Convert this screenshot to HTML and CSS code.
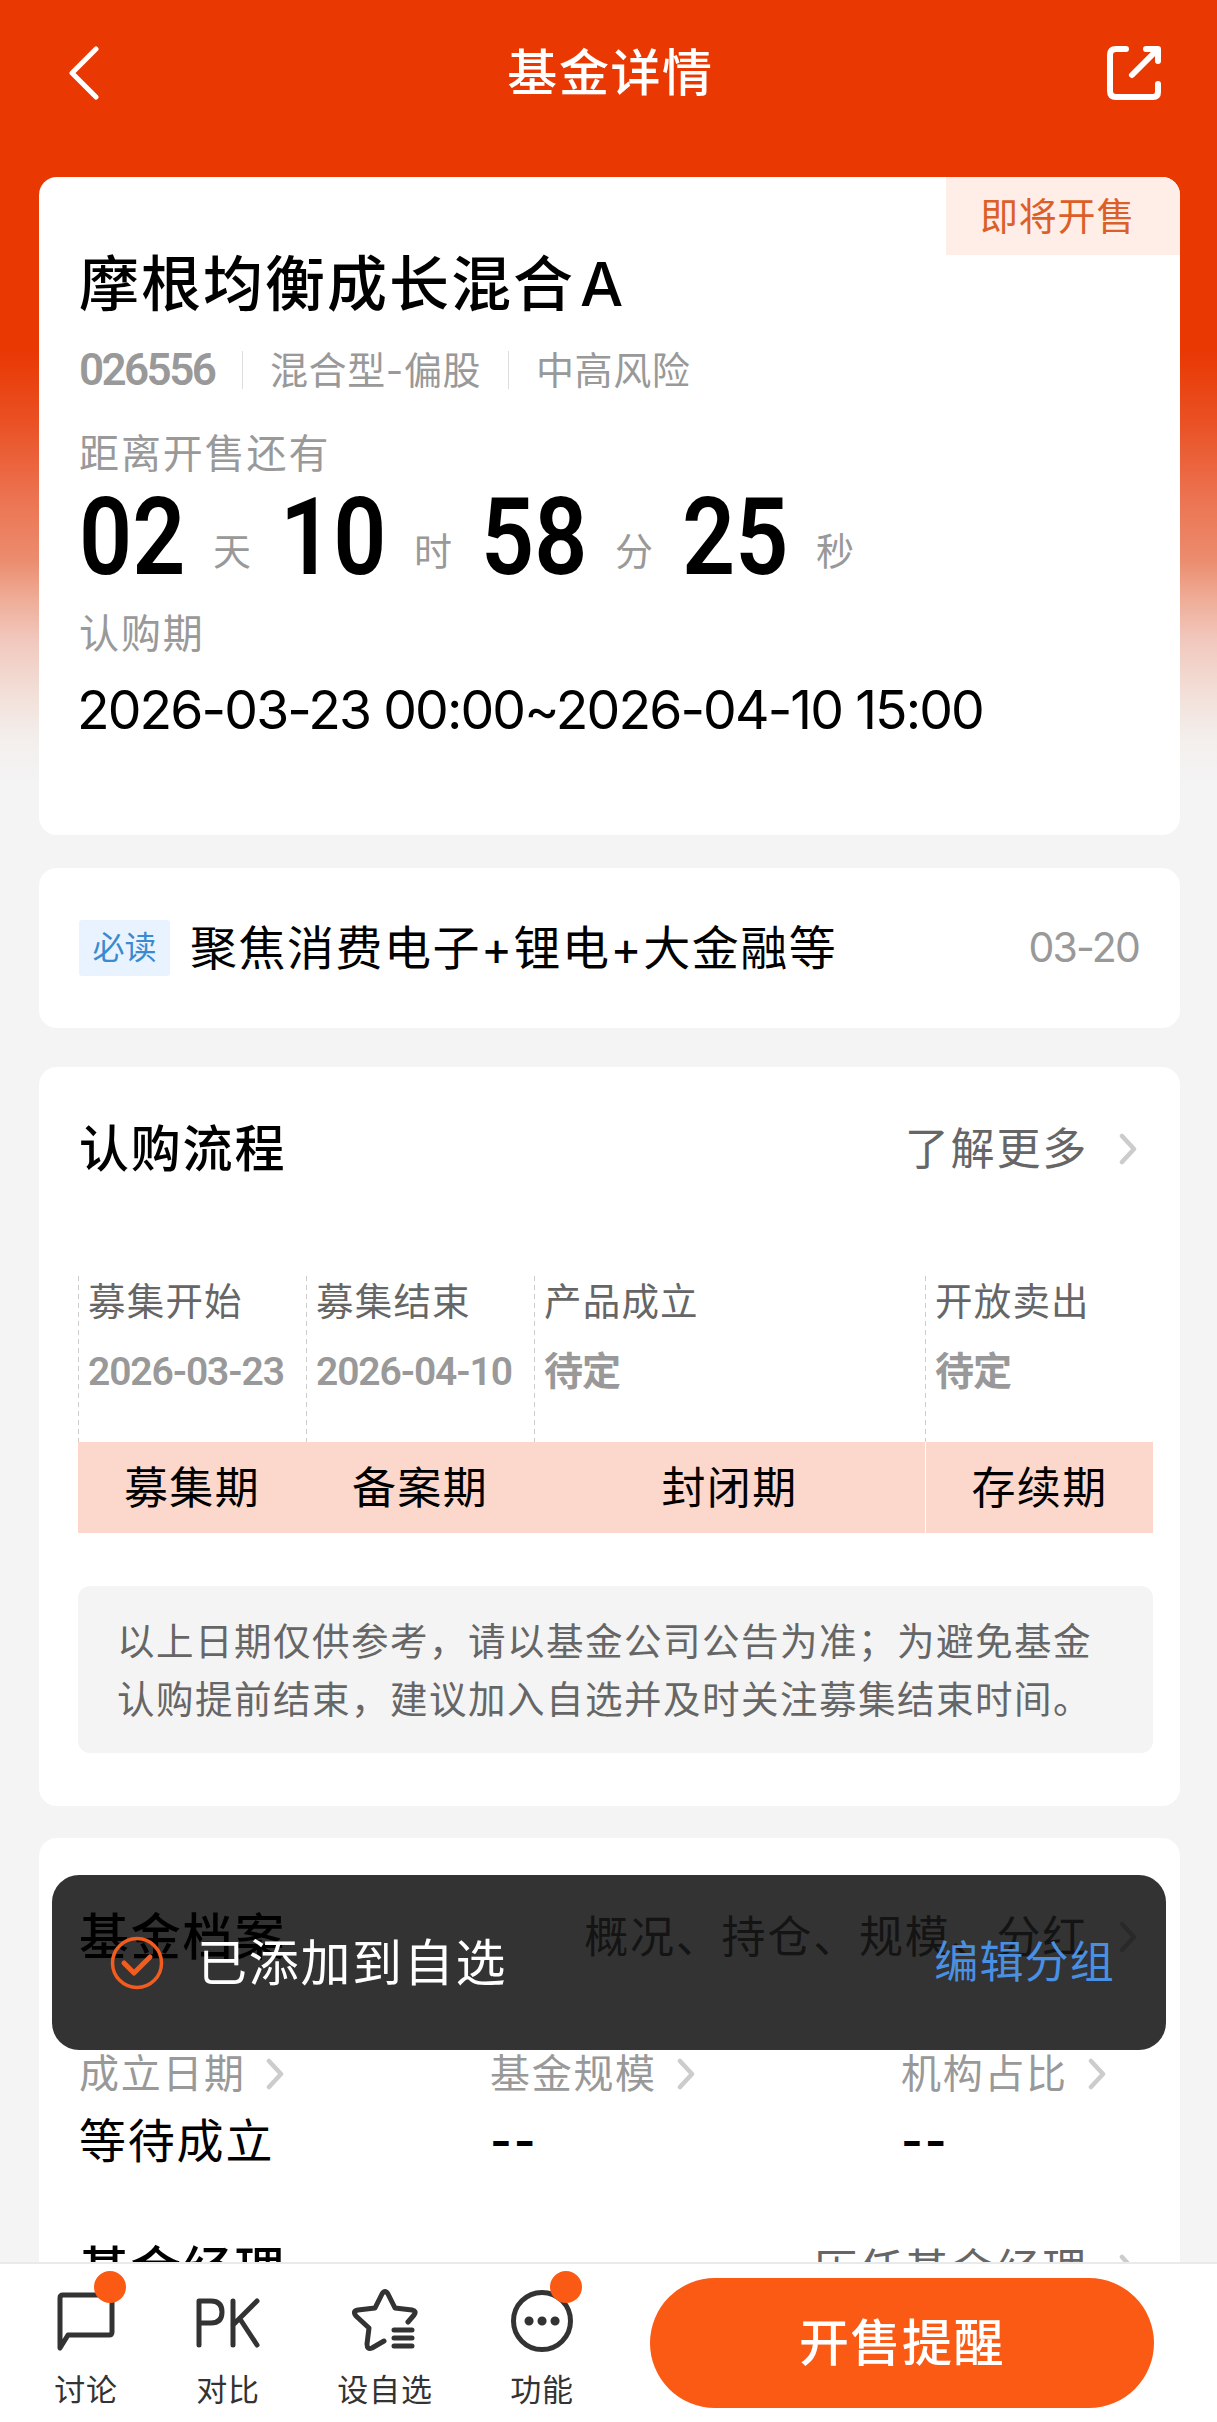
FILE: index.html
```
<!DOCTYPE html>
<html lang="zh-CN">
<head>
  <meta charset="UTF-8">
  <title>基金详情</title>
  <link rel="stylesheet" href="styles.css">
</head>
<body>
  <header class="topbar">
    <svg class="back-icon" viewBox="0 0 32 56"><path d="M29 4 L5 28 L29 52"/></svg>
    <h1>基金详情</h1>
    <svg class="share-icon" viewBox="0 0 58 58"><path d="M21 5 H11 Q5 5 5 11 V47 Q5 53 11 53 H48 Q53 53 53 48 V40 M27 31 L52 6 M41 5 H53 V17"/></svg>
  </header>

  <main>
    <!-- Fund summary -->
    <section class="card summary">
      <span class="status">即将开售</span>
      <h2 class="fund-name">摩根均衡成长混合<span>A</span></h2>
      <div class="meta">
        <span class="code">026556</span>
        <span class="type">混合型-偏股</span>
        <span class="risk">中高风险</span>
      </div>
      <p class="caption">距离开售还有</p>
      <div class="countdown">
        <div><b>02</b><span>天</span></div>
        <div><b>10</b><span>时</span></div>
        <div><b>58</b><span>分</span></div>
        <div><b>25</b><span>秒</span></div>
      </div>
      <p class="caption">认购期</p>
      <p class="period">2026-03-23 00:00~2026-04-10 15:00</p>
    </section>

    <!-- Must read -->
    <section class="card notice">
      <span class="tag">必读</span>
      <span class="notice-title">聚焦消费电子+锂电+大金融等</span>
      <span class="notice-date">03-20</span>
    </section>

    <!-- Subscription steps -->
    <section class="card process">
      <div class="card-head">
        <h3>认购流程</h3>
        <a class="more">了解更多<svg class="arrow" viewBox="0 0 20 32"><path d="M4 3 L16 16 L4 29"/></svg></a>
      </div>
      <div class="timeline">
        <div class="step"><p>募集开始</p><b>2026-03-23</b></div>
        <div class="step"><p>募集结束</p><b>2026-04-10</b></div>
        <div class="step"><p>产品成立</p><b>待定</b></div>
        <div class="step"><p>开放卖出</p><b>待定</b></div>
        <div class="phase">募集期</div>
        <div class="phase">备案期</div>
        <div class="phase">封闭期</div>
        <div class="phase last">存续期</div>
      </div>
      <p class="tip">以上日期仅供参考，请以基金公司公告为准；为避免基金<br>认购提前结束，建议加入自选并及时关注募集结束时间。</p>
    </section>

    <!-- Fund archive -->
    <section class="card archive">
      <div class="card-head">
        <h3>基金档案</h3>
        <a class="more">概况、持仓、规模、分红<svg class="arrow" viewBox="0 0 20 32"><path d="M4 3 L16 16 L4 29"/></svg></a>
      </div>
      <div class="facts">
        <div>
          <p>成立日期<svg class="arrow" viewBox="0 0 20 32"><path d="M4 3 L16 16 L4 29"/></svg></p>
          <strong>等待成立</strong>
        </div>
        <div>
          <p>基金规模<svg class="arrow" viewBox="0 0 20 32"><path d="M4 3 L16 16 L4 29"/></svg></p>
          <strong class="empty">--</strong>
        </div>
        <div>
          <p>机构占比<svg class="arrow" viewBox="0 0 20 32"><path d="M4 3 L16 16 L4 29"/></svg></p>
          <strong class="empty">--</strong>
        </div>
      </div>
      <div class="card-head">
        <h3>基金经理</h3>
        <a class="more">历任基金经理<svg class="arrow" viewBox="0 0 20 32"><path d="M4 3 L16 16 L4 29"/></svg></a>
      </div>
    </section>
  </main>

  <!-- Toast -->
  <div class="toast">
    <svg class="check" viewBox="0 0 54 54"><circle cx="27" cy="27" r="24.5"/><path d="M14 27 L24 37 L40 21"/></svg>
    <span>已添加到自选</span>
    <a>编辑分组</a>
  </div>

  <!-- Bottom actions -->
  <nav class="bottombar">
    <a class="item discuss">
      <svg viewBox="0 0 66 66"><path d="M7 60 V10 Q7 7 10 7 H56 Q59 7 59 10 V44 Q59 47 56 47 H15 Z"/></svg>
      <i class="dot"></i>
      讨论
    </a>
    <a class="item compare">
      <svg viewBox="0 0 66 66"><path d="M4 57 V13 H16 Q27 13 27 24 Q27 35 16 35 H4 M38 13 V57 M62 13 L38 37 M45 31 L62 57"/></svg>
      对比
    </a>
    <a class="item favorite">
      <svg viewBox="0 0 66 66"><path d="M56 34 L62 27 Q65 23 60 22 L43 20 L36 6 Q33 1 30 6 L23 20 L6 22 Q0 23 4 28 L17 40 L15 56 Q15 62 20 60 L32 53"/><path class="lines" d="M42 42 H60 M42 50 H60 M42 58 H60"/></svg>
      设自选
    </a>
    <a class="item functions">
      <svg viewBox="0 0 66 66"><circle cx="33" cy="33" r="28.500"/><path class="dots" d="M20 33 h.1 M33 33 h.1 M46 33 h.1"/></svg>
      <i class="dot"></i>
      功能
    </a>
    <button>开售提醒</button>
  </nav>
</body>
</html>
```
FILE: styles.css
```
* { box-sizing: border-box; }
body {
  font-family: Inter, "Noto Sans CJK SC", sans-serif;
  line-height: 1.2;
  margin: 0;
  height: 2422px;
  overflow: hidden;
  position: relative;
  color: #000;
  background: #f4f4f4 linear-gradient(#e93802 0, #e93802 350px, #ea5023 420px, #ec7452 500px, #eb8c6e 560px, #efad98 600px, #f1c8bd 640px, #f2e0d9 695px, #f3efed 740px, #f4f4f4 785px) no-repeat;
}
h1, h2, h3, p { margin: 0; font-weight: 400; }
svg {
  display: block;
  fill: none;
  stroke: currentColor;
  stroke-linecap: round;
  stroke-linejoin: round;
}

.topbar {
  display: flex;
  justify-content: space-between;
  align-items: center;
  height: 177px;
  padding: 0 54px 32px 67px;
  color: #fff;
}
.topbar h1 {
  font-size: 50px;
  letter-spacing: 1.6px;
  font-weight: 500;
  margin-left: 17px;
}
.back-icon { width: 32px; height: 56px; stroke-width: 5; }
.share-icon { width: 58px; height: 58px; stroke-width: 6; }

.card {
  background: #fff;
  border-radius: 18px;
  margin: 0 37px 0 39px;
  padding: 0 27px 0 40px;
}

.summary {
  position: relative;
  height: 658px;
  padding-top: 71px;
  overflow: hidden;
}
.status {
  position: absolute;
  top: 0;
  right: 0;
  width: 234px;
  height: 78px;
  line-height: 78px;
  padding-left: 34px;
  font-size: 38px;
  letter-spacing: 0.8px;
  color: #dc5f28;
  background: #ffede7;
}
.fund-name {
  font-size: 60px;
  letter-spacing: 2px;
  line-height: 72px;
  font-weight: 500;
}
.fund-name span { margin-left: 5px; font-size: 61px; }
.meta {
  display: flex;
  align-items: center;
  margin-top: 29px;
  height: 42px;
  line-height: 42px;
  font-size: 38px;
  letter-spacing: 0.6px;
  color: #999;
}
.meta .code {
  font: 600 44px/44px Roboto, sans-serif;
  letter-spacing: -2.6px;
  width: 163px;
}
.meta .type, .meta .risk {
  border-left: 1px solid #ddd;
  line-height: 38px;
  padding-left: 27px;
}
.meta .type { width: 266px; }
.caption {
  font-size: 40px;
  letter-spacing: 1.9px;
  line-height: 50px;
  color: #999;
}
.meta + .caption { margin-top: 38px; }
.countdown { display: flex; height: 114px; }
.countdown div { display: flex; width: 201px; }
.countdown b {
  font: 600 107px/117px Roboto, sans-serif;
  width: 134px;
  transform: scaleX(.87);
  transform-origin: 0 0;
}
.countdown span { font-size: 38px; line-height: 145px; color: #999; }
.countdown + .caption { margin-top: 16px; }
.period {
  font-size: 53.500px;
  line-height: 64px;
  margin: 19px 0 0 -2px;
  letter-spacing: -1.9px;
  white-space: nowrap;
}

.notice {
  display: flex;
  align-items: center;
  height: 160px;
  margin-top: 33px;
  padding-right: 41px;
}
.tag {
  width: 91px;
  height: 56px;
  line-height: 56px;
  text-align: center;
  font-size: 32px;
  color: #3b8ad0;
  background: #e9f3ff;
  border-radius: 3px;
}
.notice-title { margin-left: 20px; font-size: 47px; letter-spacing: 1.5px; }
.notice-date {
  margin-left: auto;
  font-size: 41px;
  letter-spacing: -1.8px;
  color: #999;
}

.process { height: 739px; margin-top: 39px; padding-top: 46px; }
.card-head {
  display: flex;
  justify-content: space-between;
  align-items: center;
  height: 72px;
  padding-right: 15px;
}
.card-head h3 { font-size: 50px; letter-spacing: 1.8px; font-weight: 500; }
.more {
  display: flex;
  align-items: center;
  font-size: 44px;
  letter-spacing: 1.8px;
  color: #666;
}
.more .arrow { margin-left: 30px; }
.arrow { width: 20px; height: 32px; stroke: #ccc; stroke-width: 4.5; }

.timeline {
  display: grid;
  grid-template-columns: 228px 228px 391px 228px;
  grid-template-rows: 166px 91px;
  margin: 91px 0 0 -1px;
}
.step {
  padding-left: 10px;
  background: repeating-linear-gradient(#ccc 0 5px, transparent 5px 9px) 0 0 / 1px 100% no-repeat;
}
.step p {
  font-size: 37.500px;
  letter-spacing: 1.2px;
  line-height: 52px;
  color: #666;
}
.step b {
  display: block;
  font: 600 39px/52px Roboto, "Noto Sans CJK SC", sans-serif;
  letter-spacing: -1.1px;
  margin-top: 18px;
  color: #999;
}
.phase {
  background: #fbd8cb;
  text-align: center;
  font-size: 44px;
  letter-spacing: 1.4px;
  line-height: 93px;
}
.phase.last { border-left: 1px solid #fff; }
.tip {
  margin: 53px 0 0 -1px;
  height: 167px;
  padding: 27px 0 0 39px;
  font-size: 37.500px;
  letter-spacing: 1.5px;
  line-height: 58px;
  white-space: nowrap;
  color: #666;
  background: #f4f4f4;
  border-radius: 12px;
}

.archive { height: 620px; margin-top: 32px; padding-top: 63px; }
.facts { display: grid; grid-template-columns: 411px 411px 1fr; margin: 76px 0 60px; }
.facts p {
  display: flex;
  align-items: center;
  font-size: 40px;
  letter-spacing: 1.7px;
  line-height: 50px;
  color: #999;
}
.facts .arrow { margin-left: 19px; }
.facts strong {
  display: block;
  margin-top: 9px;
  font-size: 47px;
  letter-spacing: 1.8px;
  line-height: 66px;
  font-weight: 400;
}
.facts .empty { font-weight: 600; }

.toast {
  position: absolute;
  left: 52px;
  top: 1875px;
  width: 1114px;
  height: 175px;
  padding: 0 51px 0 58px;
  display: flex;
  align-items: center;
  border-radius: 27px;
  background: rgba(0, 0, 0, 0.8);
  color: #fff;
  font-size: 50px;
  letter-spacing: 1.7px;
}
.check { width: 54px; height: 54px; margin-right: 33px; color: #f25c1e; stroke-width: 3.5; }
.check path { stroke-width: 5; }
.toast a { margin-left: auto; font-size: 44px; letter-spacing: 1.2px; color: #4a90e2; }

.bottombar {
  position: absolute;
  left: 0;
  right: 0;
  bottom: 0;
  height: 160px;
  background: #fff;
  border-top: 2px solid #eaeaea;
  color: #333;
}
.item {
  position: absolute;
  top: 24px;
  width: 100px;
  text-align: center;
  font-size: 31px;
  line-height: 42px;
  letter-spacing: 0.8px;
}
.item svg { width: 66px; height: 66px; margin: 0 auto 15px; stroke-width: 5; }
.discuss { left: 36px; }
.compare { left: 178px; }
.favorite { left: 335px; }
.functions { left: 492px; }
.item .dots { stroke-width: 9; }
.dot {
  position: absolute;
  left: 58px;
  top: -17px;
  width: 32px;
  height: 32px;
  border-radius: 50%;
  background: #fb5a14;
}
.bottombar button {
  position: absolute;
  left: 650px;
  top: 14px;
  width: 504px;
  height: 130px;
  padding: 0 0 1px;
  border: 0;
  border-radius: 65px;
  background: #fb5a14;
  color: #fff;
  font: 500 50px/60px Inter, "Noto Sans CJK SC", sans-serif;
  letter-spacing: 1.5px;
}
```
